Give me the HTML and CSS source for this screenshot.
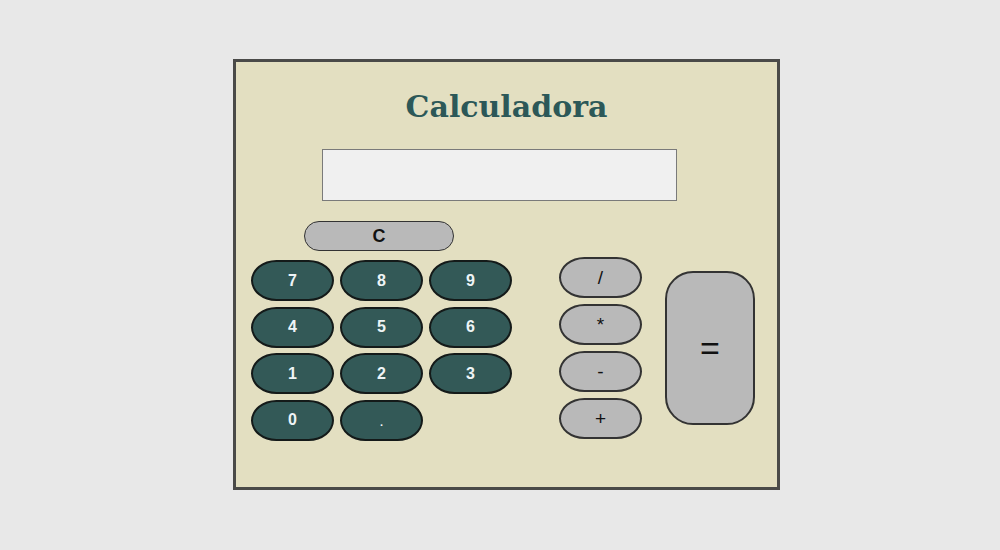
FILE: index.html
```html
<!DOCTYPE html>
<html lang="es">
<head>
<meta charset="utf-8">
<title>Calculadora</title>
<link rel="stylesheet" href="styles.css">
</head>
<body>
<div class="calc">
  <h1 class="title">Calculadora</h1>
  <input class="display" type="text" value="">
  <div class="keypad">
    <div class="left">
      <button class="btn-clear">C</button>
      <div class="numbers">
        <button class="num">7</button>
        <button class="num">8</button>
        <button class="num">9</button>
        <button class="num">4</button>
        <button class="num">5</button>
        <button class="num">6</button>
        <button class="num">1</button>
        <button class="num">2</button>
        <button class="num">3</button>
        <button class="num">0</button>
        <button class="num dot">.</button>
      </div>
    </div>
    <div class="ops">
      <button class="op">/</button>
      <button class="op">*</button>
      <button class="op">-</button>
      <button class="op">+</button>
    </div>
    <button class="equals">=</button>
  </div>
</div>
</body>
</html>
```
FILE: styles.css
```css
html, body {
  margin: 0;
  padding: 0;
}
body {
  background: #e8e8e8;
  width: 1000px;
  height: 550px;
  font-family: "Liberation Sans", Arial, sans-serif;
}
.calc {
  box-sizing: border-box;
  width: 547px;
  height: 431px;
  margin: 59px 0 0 233px;
  border: 3px solid #4a4a48;
  background: #e3dfc1;
  padding: 27px 0 0 0;
}
.title {
  margin: 0;
  font-family: "DejaVu Serif", Georgia, serif;
  font-weight: bold;
  font-size: 30px;
  line-height: 36px;
  text-align: center;
  color: #2c5858;
}
.display {
  display: block;
  box-sizing: border-box;
  width: 355px;
  height: 52px;
  margin: 24px 0 0 86px;
  border: 1px solid #7a7a7a;
  background: #f0f0f0;
  padding: 0;
}
.keypad {
  display: flex;
  align-items: flex-start;
  margin: 20px 0 0 15px;
}
.left {
  width: 260px;
}
button {
  box-sizing: border-box;
  margin: 0;
  padding: 0;
  font-family: "Liberation Sans", Arial, sans-serif;
  cursor: pointer;
}
.btn-clear {
  display: block;
  width: 150px;
  height: 30px;
  margin-left: 53px;
  border: 1.5px solid #333;
  border-radius: 15px;
  background: #b9b9b9;
  color: #111;
  font-weight: bold;
  font-size: 18px;
}
.numbers {
  display: grid;
  grid-template-columns: repeat(3, 83px);
  grid-auto-rows: 41px;
  column-gap: 6px;
  row-gap: 5.5px;
  margin-top: 9px;
}
.num {
  border: 2px solid #141a19;
  border-radius: 26px / 21px;
  background: #335957;
  color: #eef4f6;
  font-weight: bold;
  font-size: 16px;
}
.dot {
  font-size: 11px;
  padding-top: 4px;
}
.ops {
  display: flex;
  flex-direction: column;
  gap: 6px;
  margin: 36px 0 0 48px;
}
.op {
  width: 83px;
  height: 41px;
  border: 2px solid #333;
  border-radius: 26px / 21px;
  background: #b9b9b9;
  color: #111;
  font-size: 19px;
}
.equals {
  width: 90px;
  height: 154px;
  margin: 50px 0 0 23px;
  border: 2px solid #333;
  border-radius: 28px;
  background: #b9b9b9;
  color: #111;
  font-size: 34px;
}
```
